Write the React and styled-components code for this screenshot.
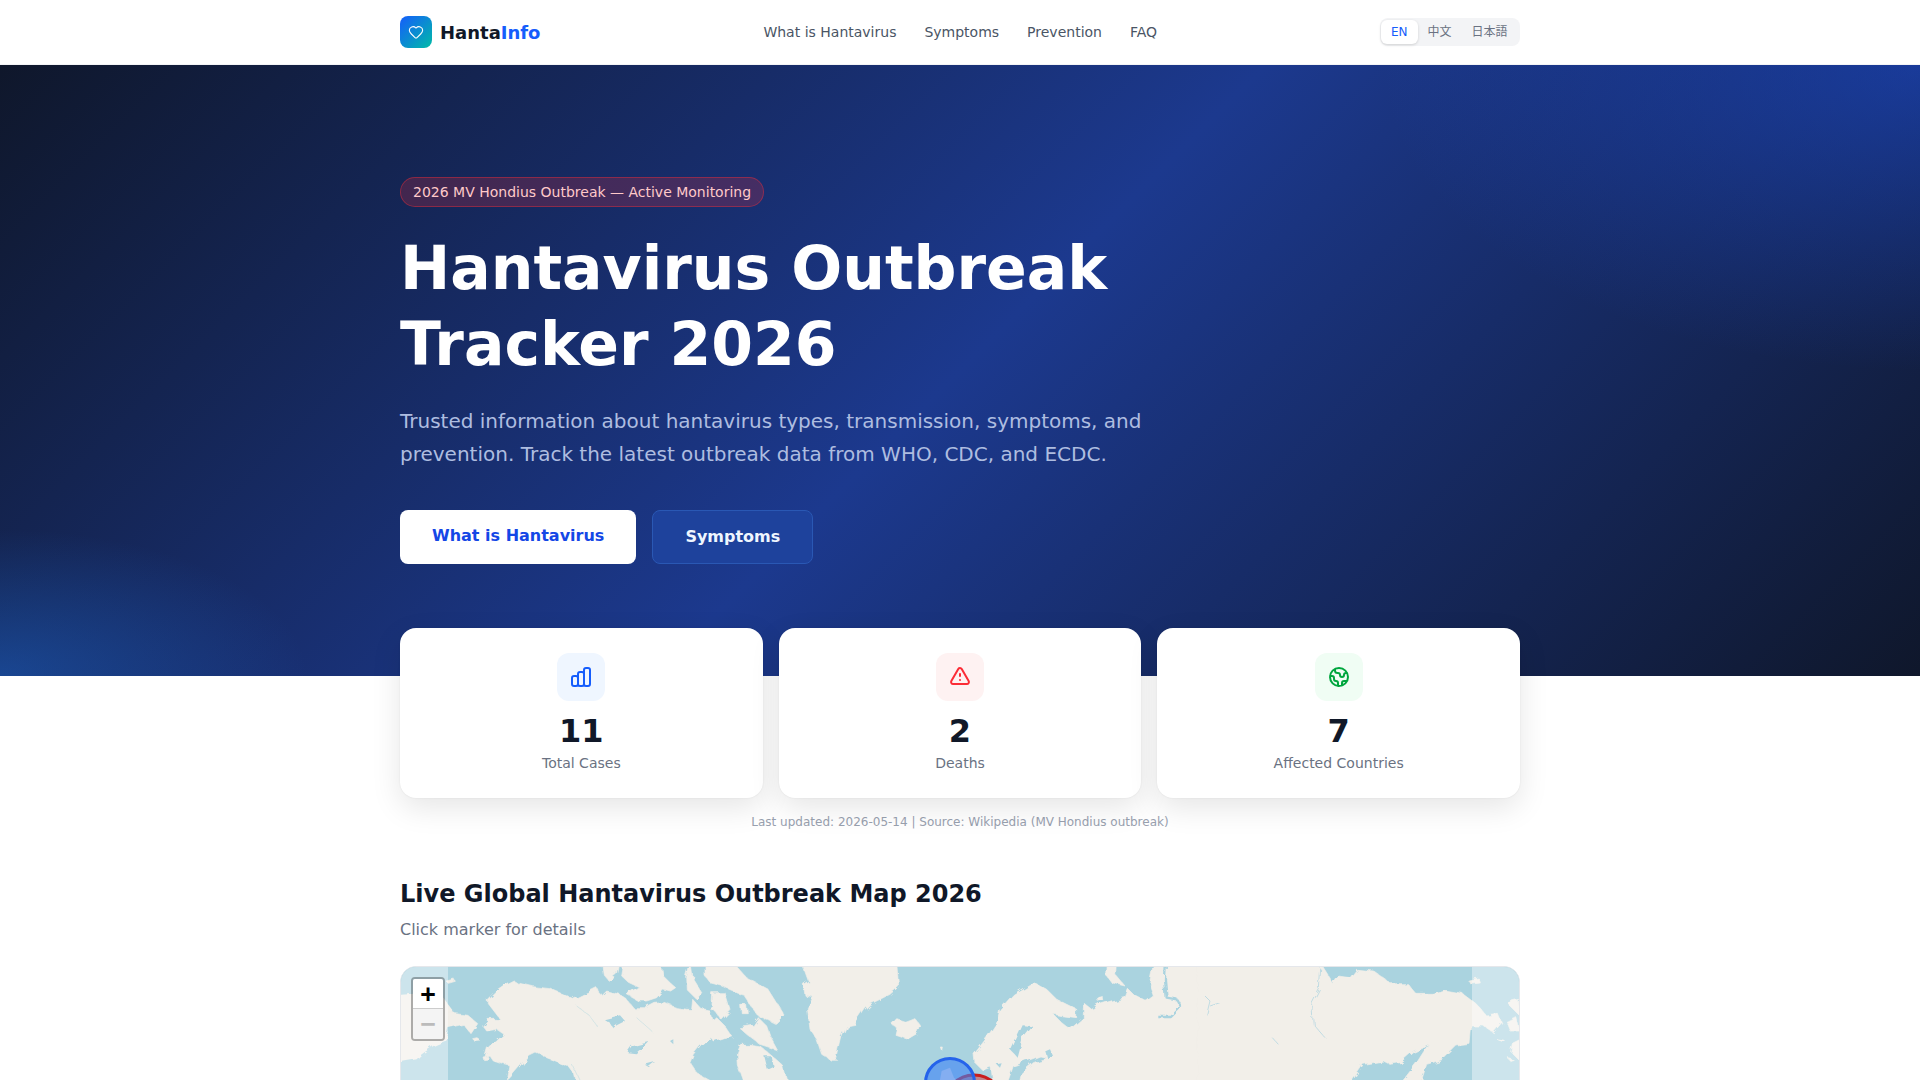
import React from "react";
import styled, { createGlobalStyle } from "styled-components";
import { Heart } from "lucide-react";
import {
  HiOutlineChartBar,
  HiOutlineExclamation,
  HiOutlineGlobe,
} from "react-icons/hi";

const GlobalStyle = createGlobalStyle`
  * { box-sizing: border-box; }
  html, body { margin: 0; padding: 0; background: #fff; }
  body {
    font-family: "DejaVu Sans", "Noto Sans CJK JP", sans-serif;
    color: #101828;
  }
`;

const Container = styled.div`
  width: 1120px;
  margin: 0 auto;
`;

const Nav = styled.nav`
  height: 65px;
  background: #fff;
  border-bottom: 1px solid #f3f4f6;
`;

const NavInner = styled(Container)`
  height: 100%;
  display: flex;
  align-items: center;
  justify-content: space-between;
`;

const Brand = styled.a`
  display: flex;
  align-items: center;
  gap: 8px;
  font-size: 18px;
  font-weight: 700;
  color: #101828;
`;

const LogoMark = styled.span`
  width: 32px;
  height: 32px;
  border-radius: 8px;
  display: flex;
  align-items: center;
  justify-content: center;
  color: #fff;
  background: linear-gradient(135deg, #155dfc, #00bba7);
`;

const BrandAccent = styled.span`
  color: #155dfc;
`;

const NavLinks = styled.div`
  display: flex;
  gap: 28px;
`;

const NavLink = styled.a`
  font-size: 14px;
  line-height: 20px;
  color: #4a5565;
`;

const LangSwitch = styled.div`
  display: flex;
  padding: 2px 1px;
  height: 28px;
  width: 140px;
  border-radius: 8px;
  background: #f3f4f6;
`;

const LangButton = styled.span`
  padding: 0 10px;
  font-size: 12px;
  line-height: 24px;
  white-space: nowrap;
  flex-shrink: 0;
  border-radius: 6px;
  color: ${(props) => (props.$active ? "#155dfc" : "#6a7282")};
  font-weight: ${(props) => (props.$active ? 500 : 400)};
  background: ${(props) => (props.$active ? "#fff" : "transparent")};
  box-shadow: ${(props) =>
    props.$active ? "0 1px 3px rgba(0, 0, 0, 0.15)" : "none"};
`;

const Hero = styled.section`
  padding: 112px 0;
  color: #fff;
  background:
    radial-gradient(ellipse 28% 50% at 100% 0%, rgba(29, 78, 216, 0.5), transparent),
    radial-gradient(ellipse 16% 24% at 0% 100%, rgba(29, 95, 190, 0.55), transparent),
    linear-gradient(135deg, #0f172b 0%, #1c398e 50%, #0f172b 100%);
`;

const HeroBody = styled.div`
  max-width: 768px;
`;

const Badge = styled.div`
  display: inline-block;
  height: 30px;
  padding: 0 12px;
  font-size: 14px;
  line-height: 28px;
  color: #ffc9c9;
  border-radius: 999px;
  border: 1px solid rgba(251, 44, 54, 0.4);
  background: rgba(251, 44, 54, 0.2);
  vertical-align: top;
`;

const Title = styled.h1`
  margin: 23px 0 23px;
  font-size: 60px;
  line-height: 76px;
  font-weight: 700;
`;

const Lead = styled.p`
  margin: 0 0 39px;
  font-size: 20px;
  line-height: 33px;
  color: #aebde0;
`;

const Actions = styled.div`
  display: flex;
  gap: 16px;
`;

const Button = styled.a`
  padding: 14px 32px;
  font-size: 16px;
  line-height: 24px;
  font-weight: 600;
  border-radius: 8px;
  color: #1447e6;
  background: #fff;
`;

const GhostButton = styled(Button)`
  color: #eff6ff;
  background: #1e429c;
  border: 1px solid #2a58b4;
`;

const Stats = styled(Container)`
  position: relative;
  z-index: 1;
  margin-top: -48px;
  display: grid;
  grid-template-columns: repeat(3, 1fr);
  gap: 16px;
`;

const StatCard = styled.div`
  height: 170px;
  padding: 25px;
  display: flex;
  flex-direction: column;
  align-items: center;
  border-radius: 16px;
  background: #fff;
  box-shadow: 0 10px 30px rgba(0, 0, 0, 0.1), 0 0 2px rgba(0, 0, 0, 0.08);
`;

const StatIcon = styled.div`
  width: 48px;
  height: 48px;
  border-radius: 12px;
  display: flex;
  align-items: center;
  justify-content: center;
  color: ${(props) => props.$color};
  background: ${(props) => props.$bg};
`;

const StatValue = styled.div`
  margin-top: 12px;
  font-size: 32px;
  line-height: 36px;
  font-weight: 700;
  color: #101828;
`;

const StatLabel = styled.div`
  margin-top: 4px;
  font-size: 14px;
  line-height: 20px;
  color: #6a7282;
`;

const Updated = styled.p`
  margin: 16px 0 0;
  text-align: center;
  font-size: 12px;
  line-height: 16px;
  color: #99a1af;
`;

const MapSection = styled(Container)`
  padding-top: 48px;
`;

const SectionTitle = styled.h2`
  margin: 0 0 8px;
  font-size: 24px;
  line-height: 32px;
  font-weight: 700;
  color: #101828;
`;

const SectionText = styled.p`
  margin: 0 0 24px;
  font-size: 16px;
  line-height: 24px;
  color: #6a7282;
`;

const MapFrame = styled.div`
  position: relative;
  height: 500px;
  overflow: hidden;
  border-radius: 16px;
  border: 1px solid #e5e7eb;
  background: #aad3df;
`;

const MapSvg = styled.svg`
  display: block;
  position: absolute;
  top: -1px;
  left: -1px;
`;

const ZoomControl = styled.div`
  position: absolute;
  top: 10px;
  left: 10px;
  width: 34px;
  border-radius: 4px;
  border: 2px solid rgba(0, 0, 0, 0.3);
  background-clip: padding-box;
  overflow: hidden;
`;

const ZoomButton = styled.a`
  display: block;
  width: 30px;
  text-align: center;
  font-family: "DejaVu Sans Mono", monospace;
  font-size: 25px;
  line-height: 30px;
  font-weight: 700;
  color: ${(props) => (props.$disabled ? "#bbb" : "#000")};
  background: ${(props) => (props.$disabled ? "#f4f4f4" : "#fff")};
  border-bottom: ${(props) => (props.$disabled ? "none" : "1px solid #ccc")};
  height: 30px;
`;

// outlines traced per 3x crop, each group has its own x offset.
// y=440 is below the fold, it only keeps the wobble filter off the visible edge
const westLand = [
  "290,72 315,55 340,42 352,50 400,62 450,68 490,85 520,100 550,85 590,65 605,90 620,75 660,85 680,100 700,125 740,125 765,112 790,110 830,125 860,130 875,130 878,100 905,130 930,135 940,165 950,155 975,180 995,210 970,215 940,225 930,212 900,240 880,265 870,290 890,320 930,342 945,440 525,440 525,342 520,320 505,300 480,290 440,275 405,258 385,268 360,300 330,335 322,342 330,300 310,295 280,285 270,270 258,275 265,250 290,225 312,205 290,190 260,195 248,180 265,160 300,160 285,140 262,110 262,100",
  "605,-10 660,-10 652,28 628,46 610,25",
  "672,-10 782,-10 790,30 815,55 830,68 815,78 790,72 770,95 740,105 715,105 680,85 716,62 682,46 665,30",
  "860,32 872,-10 880,40 905,80 890,100 862,72",
  "915,-10 1000,-10 1040,35 1105,70 1155,150 1130,175 1100,160 1075,150 1060,130 1030,85 1000,75 965,60 930,50 915,30",
  "935,80 975,80 990,130 962,160 945,135 932,130",
  "1018,185 1060,178 1075,155 1100,180 1112,215 1132,252 1080,235 1040,205",
  "1022,235 1050,235 1080,240 1105,260 1150,300 1160,342 1165,440 1030,440 1030,342 1015,300 1012,260",
  "1022,118 1040,118 1042,140 1024,140",
  "145,140 165,140 200,145 230,170 210,200 190,175 145,185",
  "135,42 160,36 166,46 145,52",
  "215,215 228,212 240,222 222,224",
  "252,276 266,274 268,282 254,284",
];

const westLakes = [
  "612,160 660,148 675,165 650,178 640,186 630,170",
  "685,262 700,240 748,228 728,250 710,265",
  "735,296 765,288 746,303",
  "1090,268 1112,268 1118,300 1100,308",
  "965,230 982,228 980,240",
  "810,225 820,220 820,235",
];

const eastLand = [
  "5,-10 290,-10 296,62 270,85 210,115 195,130 165,175 140,180 125,215 110,280 90,280 65,265 50,220 30,190 22,125 40,92 15,88 10,55 25,45",
  "275,175 290,158 320,168 345,158 362,180 355,200 325,218 300,210 285,205 290,185",
  "522,265 560,215 590,170 600,130 640,85 700,48 740,70 770,100 830,130 830,155 790,150 760,145 785,170 810,190 850,155 850,110 875,130 900,115 950,100 975,95 985,70 1000,85 1040,105 1060,90 1050,60 1065,-10 1200,-10 1200,440 660,440 660,342 665,320 700,290 740,275 720,270 680,285 640,300 625,342 625,440 575,440 575,342 570,300 545,310 525,290",
  "922,-10 952,-10 950,30 975,60 935,50 920,30",
  "892,92 906,88 908,102 894,106",
  "418,240 424,240 422,252",
];

const eastLakes = [
  "630,250 665,175 695,178 665,215 650,272",
  "738,255 750,250 760,272 745,280",
  "590,295 605,292 600,305",
];

const farEastLand = [
  "-5,-10 360,-10 385,30 400,55 415,30 450,35 470,10 520,15 570,50 620,50 650,85 700,85 735,75 790,85 830,115 860,150 895,145 905,170 880,200 850,180 815,180 810,235 770,240 730,280 680,295 665,342 665,440 610,440 610,342 650,290 685,235 640,255 600,290 570,295 550,285 490,295 458,342 440,440 -5,440",
  "805,42 835,36 838,48 810,52",
  "935,105 955,100 960,150 930,120",
  "920,170 950,155 960,195 930,195",
  "885,215 910,220 905,226",
  "940,235 960,225 960,285 935,260",
  "925,275 940,280 928,284",
];

const Shapes = ({ land, lakes, x }) => (
  <g transform={`translate(${x} 0) scale(${1 / 3})`}>
    {land.map((points) => (
      <polygon
        key={points}
        points={points}
        fill="#f2efe9"
        stroke="#f2efe9"
        strokeWidth="2"
        strokeLinejoin="round"
      />
    ))}
    {lakes &&
      lakes.map((points) => (
        <polygon key={points} points={points} fill="#aad3df" />
      ))}
  </g>
);

const WorldMap = () => (
  <MapSvg width="1120" height="500" viewBox="0 0 1120 500">
    <defs>
      <filter id="coast" x="-5%" y="-5%" width="110%" height="110%">
        <feTurbulence type="fractalNoise" baseFrequency="0.09" numOctaves="3" seed="4" />
        <feDisplacementMap in="SourceGraphic" scale="7" />
      </filter>
    </defs>
    <rect width="1120" height="500" fill="#aad3df" />
    <g filter="url(#coast)">
      <g transform={`scale(${1 / 3})`}>
        <polygon
          points="-20,85 40,80 130,95 160,135 145,185 135,225 100,240 65,265 50,280 -20,292"
          fill="#f2efe9"
        />
      </g>
      <Shapes land={westLand} lakes={westLakes} x={0} />
      <Shapes land={eastLand} lakes={eastLakes} x={400} />
      <Shapes land={farEastLand} x={800} />
      <g fill="none" stroke="#aad3df" strokeLinejoin="round">
        <path
          transform="translate(400 0) scale(0.3333)"
          d="M1098 -10 L1095 40 L1100 95 L1130 100 L1140 120 L1110 150 L1072 150"
          strokeWidth="7"
        />
        <path
          transform="translate(800 0) scale(0.3333)"
          d="M362 8 L358 70 L335 115 L340 175 L375 215"
          strokeWidth="3"
          opacity="0.7"
        />
        <path
          transform="translate(800 0) scale(0.3333)"
          d="M15 90 L30 105 L20 145 M30 120 L60 110 M220 218 L235 235"
          strokeWidth="3"
          opacity="0.7"
        />
        <path
          transform="scale(0.3333)"
          d="M530 120 L570 150 L590 180 M520 300 L540 342 M710 155 L760 200"
          strokeWidth="2"
          opacity="0.6"
        />
      </g>
    </g>
    <rect width="48" height="500" fill="#fff" opacity="0.4" />
    <rect x="1072" width="48" height="500" fill="#fff" opacity="0.4" />
    <g transform="translate(400 0) scale(0.3333)">
      <polygon
        points="425,315 450,305 462,335 470,342 420,342"
        fill="#f2efe9"
      />
    </g>
    <circle
      cx="574"
      cy="138"
      r="29"
      fill="#dc2626"
      fillOpacity="0.45"
      stroke="#c81e1e"
      strokeWidth="3"
    />
    <circle
      cx="550"
      cy="117"
      r="24.5"
      fill="#3b82f6"
      fillOpacity="0.6"
      stroke="#2563eb"
      strokeWidth="3"
    />
  </MapSvg>
);

const stats = [
  {
    value: "11",
    label: "Total Cases",
    Icon: HiOutlineChartBar,
    color: "#155dfc",
    bg: "#eff6ff",
  },
  {
    value: "2",
    label: "Deaths",
    Icon: HiOutlineExclamation,
    color: "#fb2c36",
    bg: "#fef2f2",
  },
  {
    value: "7",
    label: "Affected Countries",
    Icon: HiOutlineGlobe,
    color: "#00a63e",
    bg: "#f0fdf4",
  },
];

export default function App() {
  return (
    <>
      <GlobalStyle />
      <Nav>
        <NavInner>
          <Brand>
            <LogoMark>
              <Heart size="16" strokeWidth="1.6" />
            </LogoMark>
            <span>
              Hanta<BrandAccent>Info</BrandAccent>
            </span>
          </Brand>
          <NavLinks>
            <NavLink>What is Hantavirus</NavLink>
            <NavLink>Symptoms</NavLink>
            <NavLink>Prevention</NavLink>
            <NavLink>FAQ</NavLink>
          </NavLinks>
          <LangSwitch>
            <LangButton $active>EN</LangButton>
            <LangButton>中文</LangButton>
            <LangButton>日本語</LangButton>
          </LangSwitch>
        </NavInner>
      </Nav>

      <Hero>
        <Container>
          <HeroBody>
            <Badge>2026 MV Hondius Outbreak — Active Monitoring</Badge>
            <Title>Hantavirus Outbreak Tracker 2026</Title>
            <Lead>
              Trusted information about hantavirus types, transmission, symptoms,
              and prevention. Track the latest outbreak data from WHO, CDC, and
              ECDC.
            </Lead>
            <Actions>
              <Button>What is Hantavirus</Button>
              <GhostButton>Symptoms</GhostButton>
            </Actions>
          </HeroBody>
        </Container>
      </Hero>

      <Stats>
        {stats.map(({ value, label, Icon, color, bg }) => (
          <StatCard key={label}>
            <StatIcon $color={color} $bg={bg}>
              <Icon size="24" />
            </StatIcon>
            <StatValue>{value}</StatValue>
            <StatLabel>{label}</StatLabel>
          </StatCard>
        ))}
      </Stats>
      <Updated>Last updated: 2026-05-14 | Source: Wikipedia (MV Hondius outbreak)</Updated>

      <MapSection>
        <SectionTitle>Live Global Hantavirus Outbreak Map 2026</SectionTitle>
        <SectionText>Click marker for details</SectionText>
        <MapFrame>
          <WorldMap />
          <ZoomControl>
            <ZoomButton>+</ZoomButton>
            <ZoomButton $disabled>−</ZoomButton>
          </ZoomControl>
        </MapFrame>
      </MapSection>
    </>
  );
}
